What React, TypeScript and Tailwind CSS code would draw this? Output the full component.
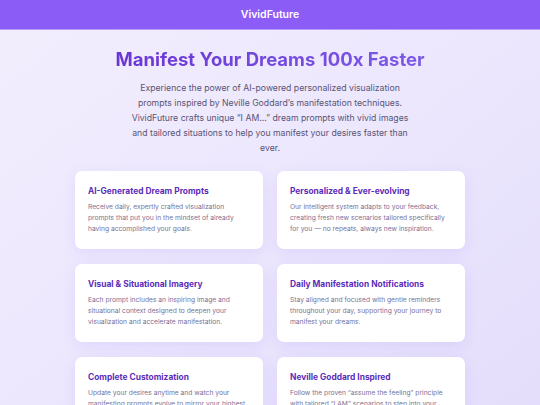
const features = [
  {
    title: "AI-Generated Dream Prompts",
    body: "Receive daily, expertly crafted visualization prompts that put you in the mindset of already having accomplished your goals.",
  },
  {
    title: "Personalized & Ever-evolving",
    body: "Our intelligent system adapts to your feedback, creating fresh new scenarios tailored specifically for you — no repeats, always new inspiration.",
  },
  {
    title: "Visual & Situational Imagery",
    body: "Each prompt includes an inspiring image and situational context designed to deepen your visualization and accelerate manifestation.",
  },
  {
    title: "Daily Manifestation Notifications",
    body: "Stay aligned and focused with gentle reminders throughout your day, supporting your journey to manifest your dreams.",
  },
  {
    title: "Complete Customization",
    body: "Update your desires anytime and watch your manifesting prompts evolve to mirror your highest aspirations and goals.",
  },
  {
    title: "Neville Goddard Inspired",
    body: "Follow the proven \u201cassume the feeling\u201d principle with tailored \u201cI AM\u201d scenarios to step into your desired reality every day.",
  },
];

export default function App() {
  return (
    <div
      className="min-h-screen bg-gradient-to-br from-[#f2eefd] via-[#ece7fd] to-[#e3ddfb]"
      style={{ fontFamily: "Inter, 'Noto Sans', sans-serif" }}
    >
      <header className="h-[30px] flex items-center justify-center bg-[#8b5cf6] border-b border-[#b49cf8]">
        <span className="text-white text-[10.5px] font-semibold">VividFuture</span>
      </header>

      <main className="flex flex-col items-center pt-[16px]">
        <h1 className="text-[18.5px] leading-[26px] font-bold bg-gradient-to-r from-[#6b34d4] to-[#7c5ae6] bg-clip-text text-transparent">
          Manifest Your Dreams 100x Faster
        </h1>
        <p className="mt-[9px] w-[288px] text-center text-[8.7px] leading-[15px] text-[#5a5474]">
          Experience the power of AI-powered personalized visualization prompts inspired by Neville
          Goddard&rsquo;s manifestation techniques. VividFuture crafts unique &ldquo;I AM...&rdquo;
          dream prompts with vivid images and tailored situations to help you manifest your
          desires faster than ever.
        </p>

        <div className="mt-[15px] grid grid-cols-2 gap-x-[14px] gap-y-[15px] w-[390px]">
          {features.map((f) => (
            <div
              key={f.title}
              className="bg-white rounded-[7px] px-[13px] pt-[14px] pb-[14px] shadow-[0_4px_14px_rgba(139,92,246,0.12)]"
            >
              <h3 className="text-[8.4px] leading-[12px] font-bold text-[#5b2db8]">{f.title}</h3>
              <p className="mt-[5px] text-[6.7px] leading-[11px] text-[#7a7196]">{f.body}</p>
            </div>
          ))}
        </div>
      </main>
    </div>
  );
}
